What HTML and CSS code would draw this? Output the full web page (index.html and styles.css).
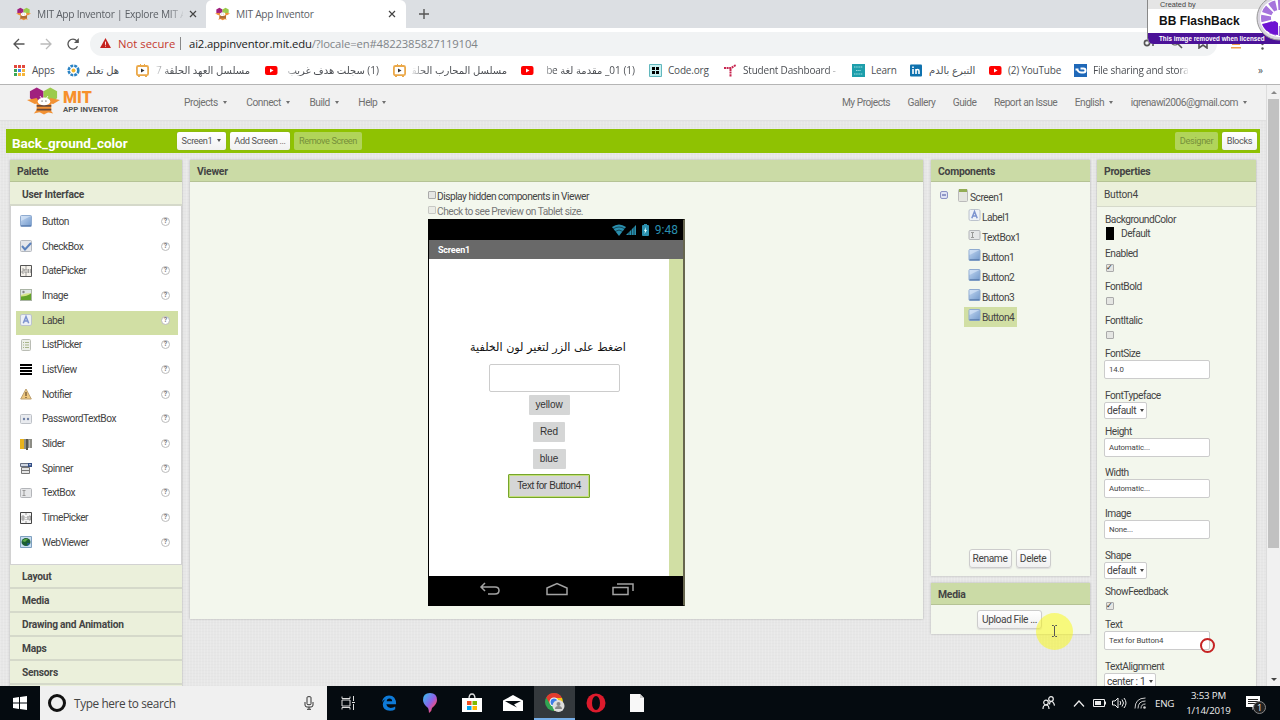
FILE: index.html
```html
<!DOCTYPE html>
<html lang="en">
  <head>
    <meta charset="utf-8">
    <title>MIT App Inventor</title>
    <link rel="stylesheet" href="styles.css">
  </head>

  <body>
    <!--Shared icons-->
    <svg class="defs">
      <linearGradient id="blue" x2="1" y2="1"><stop stop-color="#c5d9f2"/><stop offset="1" stop-color="#7198cb"/></linearGradient>
      <linearGradient id="balloon" x2="1" y2="1"><stop stop-color="#2fc6ee"/><stop offset=".5" stop-color="#8c62e8"/><stop offset=".75" stop-color="#ec4f83"/><stop offset="1" stop-color="#ffb52e"/></linearGradient>
      <symbol id="bee" viewBox="0 0 34 28">
        <path fill="#a0207e" d="M3 4l7-4 7 4v7l-6 4H7l-4-4z"/>
        <path fill="#9ccb4b" d="M17 4l7-4 7 4v7l-4 4h-4l-6-4z"/>
        <path fill="#f29133" d="M0 13l10-2 3 5-5 1zM34 13l-10-2-3 5 6 1zM7 27l4-5 4 3zM27 27l-4-5-4 3z"/>
        <path fill="#f29133" d="M10 16h15v8l-7.500 4-7.500-4z"/>
        <path fill="#6a4a3a" d="M10 18h15v1.800H10zM10 22h15v1.800H10z"/>
        <ellipse cx="17.500" cy="14.500" rx="6.500" ry="4" fill="#fff"/>
        <path stroke="#fff" fill="none" d="M13.500 9l2 3M21.500 9l-2 3"/>
        <circle cx="15.500" cy="14" r=".6"/><circle cx="19.500" cy="14" r=".6"/>
      </symbol>
      <symbol id="tv" viewBox="0 0 13 13"><rect x=".9" y="2" width="11.2" height="9.2" rx="1.5" fill="#fff" stroke="#eba94a" stroke-width="1.8"/><path stroke="#eba94a" d="M4 0l2 2M9 0L7 2M2 12.5h2M9 12.5h2"/><path fill="#333" d="M5 4.5l3.5 2L5 8.5z"/></symbol>
      <symbol id="yt" viewBox="0 0 13 13"><rect y="2" width="12.5" height="9" rx="2" fill="#f00"/><path fill="#fff" d="M5 4.5l3.5 2L5 8.5z"/></symbol>
      <symbol id="button" viewBox="0 0 12 12"><rect x=".5" y=".5" width="11" height="11" rx="1" fill="url(#blue)" stroke="#8fabd0"/><path fill="#dbe8f8" opacity=".6" d="M1 1h10L1 6z"/><path stroke="#5577a8" d="M1 10.8h10"/></symbol>
      <symbol id="label" viewBox="0 0 12 12"><rect x=".5" y=".5" width="11" height="11" rx="1.5" fill="#edf1f7" stroke="#bcc3cd"/><path fill="none" stroke="#7c93cf" stroke-width="1.5" d="M3.3 9.3L6 2.5l2.7 6.8M4.2 7h3.6"/></symbol>
      <symbol id="textbox" viewBox="0 0 12 12"><rect x=".5" y="1.5" width="11" height="9" rx="1" fill="#e5e6e8" stroke="#b3b5b9"/><path stroke="#999" fill="none" d="M2.5 3.5h3M4 3.5v5M2.5 8.5h3"/></symbol>
    </svg>

    <div class="tabs">
      <div class="tab">
        <svg class="bee-icon"><use href="#bee"/></svg>
        <span class="tab-title fade">MIT App Inventor | Explore MIT A</span>
        <svg class="close" viewBox="0 0 8 8"><path d="M1 1l6 6M7 1L1 7"/></svg>
      </div>
      <div class="tab active">
        <svg class="bee-icon"><use href="#bee"/></svg>
        <span class="tab-title">MIT App Inventor</span>
        <svg class="close" viewBox="0 0 8 8"><path d="M1 1l6 6M7 1L1 7"/></svg>
      </div>
      <svg class="plus" viewBox="0 0 10 10"><path d="M5 0v10M0 5h10"/></svg>
    </div>

    <div class="toolbar">
      <svg class="nav-icon" viewBox="0 0 12 12"><path d="M11.5 6H1.5M6 1L1 6l5 5"/></svg>
      <svg class="nav-icon light" viewBox="0 0 12 12"><path d="M.5 6h10M6 1l5 5-5 5"/></svg>
      <svg class="nav-icon" viewBox="0 0 12 12"><path d="M10.5 8.2A5 5 0 1 1 9.8 2.8L11 4.2"/><path fill="#555" stroke="none" d="M11.8 0v5H7z"/></svg>
      <div class="omnibox">
        <svg class="warn" viewBox="0 0 12 11"><path fill="#c5221f" d="M6 0l6 11H0z"/><path stroke="#fff" d="M6 4v3.5M6 8.5v1"/></svg>
        <span class="not-secure">Not secure</span>
        <span class="divider"></span>
        <span class="url">ai2.appinventor.mit.edu<span class="path">/?locale=en#4822385827119104</span></span>
        <svg class="omni-actions" viewBox="0 0 66 12"><g fill="none" stroke="#555" stroke-width="1.6"><circle cx="4" cy="6" r="2.6"/><path d="M6 6h6M10 6v3"/><circle cx="32" cy="4" r="4" stroke-width="1.2"/><path d="M35 7l4 4M56 1v10l4-3 4 3V1"/></g></svg>
      </div>
      <svg class="ext" viewBox="0 0 10 10"><path fill="#f0a04b" d="M1 1h8v5H1zM0 8h10v1.5H0z"/></svg>
      <svg class="dots" viewBox="0 0 3 12"><circle cx="1.500" cy="1.500" r="1.200"/><circle cx="1.500" cy="6" r="1.200"/><circle cx="1.500" cy="10.500" r="1.200"/></svg>
    </div>

    <div class="bookmarks">
      <div class="bm w54">
        <svg viewBox="0 0 13 13"><g fill="#e2483d"><path d="M1 1h3v3H1zM5 1h3v3H5zM9 1h3v3H9z"/></g><path fill="#3aa757" d="M1 5h3v3H1z"/><path fill="#4285f4" d="M5 5h3v3H5z"/><path fill="#f5b53c" d="M9 5h3v3H9zM5 9h3v3H5zM9 9h3v3H9z"/><path fill="#3aa757" d="M1 9h3v3H1z"/></svg>
        <span>Apps</span>
      </div>
      <div class="bm w69">
        <svg viewBox="0 0 13 13"><circle cx="6.5" cy="6.5" r="4.8" fill="none" stroke="#2b83c4" stroke-width="2.6" stroke-dasharray="2.8 1"/><circle cx="6.5" cy="6.5" r="2" fill="#f3b62f"/></svg>
        <span dir="rtl">هل تعلم</span>
      </div>
      <div class="bm w129"><svg><use href="#tv"/></svg><span class="clip fade-left" dir="rtl">مسلسل العهد الحلقة 7</span></div>
      <div class="bm w128"><svg><use href="#yt"/></svg><span class="clip fade-left" dir="rtl">(1) سجلت هدف غريب</span></div>
      <div class="bm w128"><svg><use href="#tv"/></svg><span class="clip fade-left" dir="rtl">مسلسل المحارب الحلقة</span></div>
      <div class="bm w128"><svg><use href="#yt"/></svg><span class="clip fade-left" dir="rtl">(1) 01_ مقدمة لغة be</span></div>
      <div class="bm w75">
        <svg viewBox="0 0 13 13"><path fill="#c9f1f1" stroke="#62b7bd" d="M.5.5h12v12H.5z"/><path d="M3 3h3v3H3zM7 3h3v3H7zM3 7h3v3H3zM7 7h3v3H7z"/></svg>
        <span>Code.org</span>
      </div>
      <div class="bm w128">
        <svg viewBox="0 0 13 13"><path fill="none" stroke="#c72650" stroke-width="2" stroke-dasharray="2 .6" d="M0 4h7l5-3M6.5 5v8"/></svg>
        <span class="clip fade">Student Dashboard -</span>
      </div>
      <div class="bm w58">
        <svg viewBox="0 0 13 13"><path fill="#1d9eab" d="M0 0h13v13H0z"/><path stroke="#9adde2" stroke-dasharray="1.5 .7" d="M2 3h9M4 6.5h5M2 10h9"/></svg>
        <span>Learn</span>
      </div>
      <div class="bm w79">
        <svg viewBox="0 0 13 13"><rect y=".5" width="12" height="12" rx="1" fill="#0f72ae"/><path stroke="#fff" stroke-width="1.6" fill="none" d="M3 5v5M3 2.6v1.5M6 5v5M6 7q0-1.5 1.5-1.5T9 7v3"/></svg>
        <span dir="rtl">التبرع بالدم</span>
      </div>
      <div class="bm w85"><svg><use href="#yt"/></svg><span>(2) YouTube</span></div>
      <div class="bm w128">
        <svg viewBox="0 0 13 13"><path fill="#1f68b8" d="M0 0h13v13H0z"/><path fill="none" stroke="#fff" stroke-width="2" d="M1.500 5.500h3M6.500 4.500h3a2 2 0 0 1 0 4h-2q-3 0-4-2.500"/></svg>
        <span class="clip fade">File sharing and stora</span>
      </div>
      <span class="more">»</span>
    </div>

    <div class="page">
      <div class="content">
        <div class="header">
          <svg class="logo-bee"><use href="#bee"/></svg>
          <div class="logo"><div class="mit">MIT</div><div class="ai">APP INVENTOR</div></div>
          <div class="menu">
            <span>Projects<i></i></span><span>Connect<i></i></span><span>Build<i></i></span><span>Help<i></i></span>
          </div>
          <div class="menu right">
            <span>My Projects</span><span>Gallery</span><span>Guide</span><span>Report an Issue</span><span>English<i></i></span><span>iqrenawi2006@gmail.com<i></i></span>
          </div>
        </div>

        <div class="project-bar">
          <div class="project-name">Back_ground_color</div>
          <div class="bar-button screen">Screen1<i></i></div>
          <div class="bar-button add">Add Screen ...</div>
          <div class="bar-button remove disabled">Remove Screen</div>
          <div class="bar-button designer disabled">Designer</div>
          <div class="bar-button blocks">Blocks</div>
        </div>

        <div class="columns">
          <div class="panel palette">
            <div class="panel-head">Palette</div>
            <div class="category first">User Interface</div>
            <div class="items">
              <div class="item"><svg><use href="#button"/></svg><span>Button</span><b>?</b></div>
              <div class="item"><svg viewBox="0 0 12 12"><rect x=".5" y=".5" width="11" height="11" rx="1" fill="#e4e6ea" stroke="#b4b8be"/><path fill="none" stroke="#5b82bd" stroke-width="2" d="M2 6l3 3.5L11 3"/></svg><span>CheckBox</span><b>?</b></div>
              <div class="item"><svg viewBox="0 0 12 12"><path fill="#f5f2ec" stroke="#555" d="M.5.5h11v11H.5z"/><path stroke="#888" stroke-width=".8" fill="none" d="M2 4h2v2H2v2h2M5 4h2v4H5zM8.500 4v4M10.300 4v4M6 1v2M6 9v2"/></svg><span>DatePicker</span><b>?</b></div>
              <div class="item"><svg viewBox="0 0 12 12"><rect x=".5" y=".5" width="11" height="11" fill="#dfe5e6" stroke="#aab4a5"/><path fill="#d6e48a" d="M1 6q5-2 10-2v7H1z"/><path fill="#63a32a" d="M1 7.500q6 0 10-3V11H1z"/><circle cx="3.500" cy="3" r="1.200" fill="#888"/></svg><span>Image</span><b>?</b></div>
              <div class="item selected"><svg><use href="#label"/></svg><span>Label</span><b>?</b></div>
              <div class="item"><svg viewBox="0 0 12 12"><rect x="1.500" y=".5" width="9" height="11" rx="1" fill="#eceee8" stroke="#babdb5"/><path stroke="#a9b58b" d="M3 3.500h1M5 3.500h4M3 6h1M5 6h4M3 8.500h1M5 8.500h4"/></svg><span>ListPicker</span><b>?</b></div>
              <div class="item"><svg viewBox="0 0 12 12"><path d="M0 1h12v2H0zM0 4h12v2H0zM0 7h12v2H0zM0 10h12v2H0z"/></svg><span>ListView</span><b>?</b></div>
              <div class="item"><svg viewBox="0 0 12 12"><path fill="#edc77e" stroke="#bda071" d="M6 1l5.300 10H.7z"/><path stroke="#705331" stroke-width="1.300" d="M6 4v4M6 9v1"/></svg><span>Notifier</span><b>?</b></div>
              <div class="item"><svg viewBox="0 0 12 12"><rect x=".5" y="1.500" width="11" height="9" rx="1" fill="#e9ebef" stroke="#bdc1c7"/><circle cx="4" cy="6" r="1.200" fill="#6e7fa5"/><circle cx="8" cy="6" r="1.200" fill="#6e7fa5"/></svg><span>PasswordTextBox</span><b>?</b></div>
              <div class="item"><svg viewBox="0 0 12 12"><path fill="#e8b31e" d="M0 1h4v10H0z"/><path fill="#8d8d85" d="M4 1h2v10H4zM8 1h4v9H8z"/><path fill="#55554f" d="M6 1h2v11H6z"/><path fill="#bbb" d="M9 2h1v8H9z"/></svg><span>Slider</span><b>?</b></div>
              <div class="item"><svg viewBox="0 0 12 12"><path fill="#ced6e2" stroke="#666f80" d="M.5 1.500h11v3H.5z"/><path fill="#324e86" d="M8 1h4v4H8z"/><path fill="#fff" d="M9 2.300h2l-1 1.500z"/><path fill="#e5e5e5" stroke="#777" d="M1.500 5.500h8v6h-8zM2 8.500h7"/></svg><span>Spinner</span><b>?</b></div>
              <div class="item"><svg><use href="#textbox"/></svg><span>TextBox</span><b>?</b></div>
              <div class="item"><svg viewBox="0 0 12 12"><path fill="#f4f4f4" stroke="#444" d="M.5.500h11v11H.5z"/><path stroke="#888" stroke-width=".8" fill="none" d="M2 4h2v4H2zM2 6h2M6 5v1M6 7v1M7.800 4v4M9 4h1.500v4H9zM6 1v2M6 9v2"/></svg><span>TimePicker</span><b>?</b></div>
              <div class="item"><svg viewBox="0 0 12 12"><path fill="#c7dcf0" stroke="#7fa0bf" d="M.5.500h11v11H.5z"/><ellipse cx="6" cy="6" rx="4.500" ry="4" fill="#1c5f35"/><path fill="#5ca848" d="M2 5q3-3 6-2L5 6z"/><path fill="#215a8b" d="M7 7h3.500l-3 3z"/></svg><span>WebViewer</span><b>?</b></div>
            </div>
            <div class="category">Layout</div>
            <div class="category">Media</div>
            <div class="category">Drawing and Animation</div>
            <div class="category">Maps</div>
            <div class="category">Sensors</div>
            <div class="category"></div>
          </div>

          <div class="panel viewer">
            <div class="panel-head">Viewer</div>
            <div class="viewer-body">
              <div class="option"><span class="check"></span>Display hidden components in Viewer</div>
              <div class="option dim"><span class="check"></span>Check to see Preview on Tablet size.</div>
              <div class="phone">
                <div class="status">
                  <svg viewBox="0 0 40 12"><g fill="#2a8fae"><path d="M0 3q7-5 14 0l-7 9z"/><path d="M14 11l10-10v10z"/><rect x="30" y="1" width="7" height="11" rx="1"/><path d="M32 0h3v2h-3z"/></g><path fill="none" stroke="#000" stroke-width=".5" d="M1 5q6-4 12 0M3 7.500q4-3 8 0M17 5v6M19.500 3v8M22 1v10"/><path fill="#dff" d="M34 3l-2 4h1l-.5 3 2.500-4h-1.300z"/></svg>
                  <span>9:48</span>
                </div>
                <div class="screen-title">Screen1</div>
                <div class="screen-body">
                  <div class="canvas">
                    <div class="arabic" dir="rtl">اضغط على الزر لتغير لون الخلفية</div>
                    <div class="phone-input"></div>
                    <div class="pbtn yellow">yellow</div>
                    <div class="pbtn red">Red</div>
                    <div class="pbtn blue">blue</div>
                    <div class="pbtn four">Text for Button4</div>
                  </div>
                </div>
                <div class="phone-nav">
                  <svg viewBox="0 0 22 14"><path d="M6 1L2 5l4 4M2 5h14q4 0 4 3.500T16 12H9"/></svg>
                  <svg viewBox="0 0 22 14"><path d="M1 6l10-4.500L21 6v6.500H1z"/></svg>
                  <svg viewBox="0 0 22 14"><path d="M1 5.500h15v7H1zM5 2h16v7"/></svg>
                </div>
              </div>
            </div>
          </div>

          <div class="middle">
            <div class="panel components">
              <div class="panel-head">Components</div>
              <div class="tree">
                <div class="root">
                  <svg class="minus" viewBox="0 0 8 8"><rect x=".5" y=".5" width="7" height="7" rx="1.500" fill="#dfe2f3" stroke="#8d93c4"/><path stroke="#43509c" d="M2 4h4"/></svg>
                  <svg class="screen-icon" viewBox="0 0 10 13"><rect x=".5" y=".5" width="9" height="12" rx="1" fill="#e5e6e1" stroke="#bbb"/><path fill="#93ad55" d="M1 0h8v3H1z"/></svg>
                  <span>Screen1</span>
                </div>
                <div class="node"><svg><use href="#label"/></svg><span>Label1</span></div>
                <div class="node"><svg><use href="#textbox"/></svg><span>TextBox1</span></div>
                <div class="node"><svg><use href="#button"/></svg><span>Button1</span></div>
                <div class="node"><svg><use href="#button"/></svg><span>Button2</span></div>
                <div class="node"><svg><use href="#button"/></svg><span>Button3</span></div>
                <div class="node selected"><svg><use href="#button"/></svg><span>Button4</span></div>
              </div>
              <div class="actions"><div class="btn rename">Rename</div><div class="btn delete">Delete</div></div>
            </div>
            <div class="panel media">
              <div class="panel-head">Media</div>
              <div class="btn upload">Upload File ...</div>
            </div>
          </div>

          <div class="panel properties">
            <div class="panel-head">Properties</div>
            <div class="prop-name">Button4</div>
            <div class="props">
              <div class="prop h34"><label>BackgroundColor</label><div class="color"><span class="swatch"></span>Default</div></div>
              <div class="prop"><label>Enabled</label><span class="check on"></span></div>
              <div class="prop"><label>FontBold</label><span class="check"></span></div>
              <div class="prop"><label>FontItalic</label><span class="check"></span></div>
              <div class="prop tall"><label>FontSize</label><div class="field">14.0</div></div>
              <div class="prop mid"><label>FontTypeface</label><div class="select">default<i></i></div></div>
              <div class="prop tall"><label>Height</label><div class="field">Automatic...</div></div>
              <div class="prop tall"><label>Width</label><div class="field">Automatic...</div></div>
              <div class="prop tall"><label>Image</label><div class="field">None...</div></div>
              <div class="prop mid"><label>Shape</label><div class="select">default<i></i></div></div>
              <div class="prop"><label>ShowFeedback</label><span class="check on"></span></div>
              <div class="prop tall"><label>Text</label><div class="field">Text for Button4</div></div>
              <div class="prop mid"><label>TextAlignment</label><div class="select wide">center : 1<i></i></div></div>
            </div>
          </div>
        </div>
      </div>
      <div class="scrollbar"><span class="up"></span><div class="thumb"></div><span class="down"></span></div>
    </div>

    <div class="taskbar">
      <div class="start"><svg viewBox="0 0 14 14"><path fill="#fff" d="M0 2l6-1v5.500H0zM7 .9L14 0v6.500H7zM0 7.500h6V13l-6-1zM7 7.500h7V14l-7-1z"/></svg></div>
      <div class="search">
        <span class="cortana"></span><span class="search-text">Type here to search</span>
        <svg class="mic" viewBox="0 0 10 14"><rect x="3" y=".7" width="4" height="8" rx="1" fill="none" stroke="#333"/><path fill="none" stroke="#333" d="M1 6v3q0 2 2 2h4q2 0 2-2V6M5 11v2M3 13.300h4"/></svg>
      </div>
      <div class="task"><svg viewBox="0 0 16 16"><path fill="none" stroke="#ddd" d="M2 5h8v6H2zM2 1.500v2h8v-2M2 14.500v-2h8v2M13.500 1v5M13.500 9v6M12 7.500h3"/></svg></div>
      <div class="task"><svg viewBox="0 0 18 18"><path fill="#0e7ad7" d="M1 8Q2 1 9 .5q8 0 8 10H6q1 4 5 4 3 0 5-1.500V16q-2 1.700-6 1.700-8-.5-8-7Q2.500 6 6 4.500 3 5 1 8zm5.500-1h6Q12.500 4 9.500 4T6.500 7z"/></svg></div>
      <div class="task"><svg class="big" viewBox="0 0 18 20"><path fill="url(#balloon)" d="M9 0q7 0 7 7 0 4-5 8 0 3-3 5 0-3-1-5-5-4-5-8 0-7 7-7z"/></svg></div>
      <div class="task"><svg class="big" viewBox="0 0 20 20"><path fill="none" stroke="#ddd" stroke-width="1.400" d="M7 6Q7 1 10 1t3 5"/><path fill="#fff" d="M0 5h20v14H0z"/><path fill="#f25022" d="M5 8h4.500v4H5z"/><path fill="#7fba00" d="M10.500 8H15v4h-4.500z"/><path fill="#00a4ef" d="M5 13h4.500v4H5z"/><path fill="#ffb900" d="M10.500 13H15v4h-4.500z"/></svg></div>
      <div class="task"><svg class="big" viewBox="0 0 20 20"><path fill="#fff" d="M0 7.500L10 2l10 5.500V18H0z"/><path fill="#050b10" d="M2 8h16l-7 3.500 3 3L8 11.500z"/></svg></div>
      <div class="task current"><svg class="big" viewBox="0 0 20 20"><circle cx="9" cy="10" r="9" fill="#31a452"/><path fill="#e33b2e" d="M1.200 5.500A9 9 0 0 1 17 6H9l-4 6z"/><path fill="#fbc116" d="M10 10l-1 9q9-1 9-9l-1-4H9z"/><circle cx="9" cy="10" r="4.500" fill="#fff"/><circle cx="9" cy="10" r="3.500" fill="#3c7de6"/><circle cx="13.500" cy="14" r="6" fill="#dedede"/><circle cx="13.500" cy="12" r="2" fill="#888"/><path fill="#888" d="M10 17q0-3 3.500-3t3.500 3z"/></svg></div>
      <div class="task"><svg class="big" viewBox="0 0 20 20"><ellipse cx="10" cy="10" rx="9.500" ry="9.500" fill="#dc1b2c"/><ellipse cx="10" cy="10" rx="4" ry="7" fill="#050b10"/></svg></div>
      <div class="task"><svg class="big" viewBox="0 0 20 20"><path fill="#f8f8f8" d="M3 1h10l4 4v14H3z"/><path fill="#ccc" d="M13 1v4h4z"/></svg></div>
      <div class="tray">
        <svg class="people" viewBox="0 0 13 14"><g fill="none" stroke="#eee" stroke-width="1.200"><circle cx="9" cy="3" r="2.300"/><circle cx="4" cy="6.500" r="2.300"/><path d="M1 13q0-4 3-4t3 4M7.500 8.500Q7.500 5.500 9.500 5.500t3 4"/></g></svg>
        <svg class="chevron" viewBox="0 0 12 7"><path fill="none" stroke="#eee" stroke-width="1.200" d="M1 6.500L6 1l5 5.500"/></svg>
        <svg class="battery" viewBox="0 0 13 8"><path fill="none" stroke="#eee" d="M.5.500h11v7H.5z"/><path fill="#eee" d="M2 2h6v4H2zM12 2.500h1v3h-1z"/></svg>
        <svg class="volume" viewBox="0 0 15 12"><path fill="none" stroke="#eee" d="M.5 4v4H3l3 3V1L3 4zM8 4q1.500 2 0 4M10 2.500q3 3.500 0 7M12 1q4 5 0 10"/></svg>
        <svg class="wifi" viewBox="0 0 12 12"><path fill="none" stroke="#ccc" d="M1 11.500Q1 1 11.500 1M4 11.500Q4 4 11.500 4M7 11.500Q7 7 11.500 7"/><circle cx="10.500" cy="10.500" r="1.300" fill="#ccc"/></svg>
        <span class="lang">ENG</span>
        <div class="clock"><div>3:53 PM</div><div>1/14/2019</div></div>
        <div class="notes"><svg viewBox="0 0 14 14"><path fill="#fff" d="M0 0h14v11H9l-2.500 3v-3H0z"/><path stroke="#222" d="M2 3.500h10M2 5.500h10M2 7.500h8"/></svg><span class="badge">1</span></div>
      </div>
    </div>

    <!--Recorder overlays-->
    <div class="watermark">
      <div class="created">Created by</div>
      <div class="brand">BB FlashBack</div>
      <div class="licensed">This image removed when licensed</div>
      <svg class="reel" viewBox="0 0 24 42"><circle cx="23" cy="18" r="22" fill="#d9d5df" stroke="#999"/><circle cx="23" cy="18" r="19" fill="#fff"/><circle cx="23" cy="18" r="13" fill="none" stroke="#a674dc" stroke-width="10" stroke-dasharray="5.500 2"/><path fill="#6d13d2" d="M6 24l13-3 3 2v12Q10 34 6 24z"/></svg>
    </div>
    <div class="highlight"><svg viewBox="0 0 7 12"><path fill="none" stroke="#555" d="M1 .5h1.500l1 1 1-1H6M3.500 1v10M1 11.500h1.500l1-1 1 1H6"/></svg></div>
    <div class="ring"></div>
  </body>
</html>
```

FILE: styles.css
```css
* {
  box-sizing: border-box;
}

body {
  margin: 0;
  width: 1280px;
  height: 720px;
  overflow: hidden;
  position: relative;
  display: flex;
  flex-direction: column;
  font-family: Roboto, "Noto Sans", sans-serif;
  font-size: 10.2px;
  color: #444;
  white-space: nowrap;
}

svg {
  display: block;
  flex-shrink: 0;
}

.defs {
  position: absolute;
  width: 0;
  height: 0;
}

/* browser */
.tabs,
.toolbar,
.bookmarks,
.taskbar {
  font-family: "Open Sans", "DejaVu Sans", sans-serif;
}

.tabs {
  height: 28px;
  flex-shrink: 0;
  background: #dcdfe3;
  display: flex;
  align-items: center;
}

.tab {
  width: 206px;
  height: 28px;
  padding-left: 16px;
  display: flex;
  align-items: center;
  font-size: 10.2px;
  letter-spacing: -.27px;
  color: #5c6066;
}

.tab.active {
  width: 200px;
  padding-left: 9px;
  background: #fff;
  border-radius: 6px 6px 0 0;
}

.bee-icon {
  width: 15px;
  height: 14px;
  margin-right: 6px;
}

.tab-title {
  width: 146px;
}

.close {
  width: 8px;
  height: 8px;
  margin-left: 6px;
  fill: none;
  stroke: #444;
  stroke-width: 1.2;
}

.plus {
  width: 10px;
  height: 10px;
  margin-left: 13px;
  fill: none;
  stroke: #555;
  stroke-width: 1.4;
}

.fade {
  -webkit-mask-image: linear-gradient(90deg, #000 90%, rgba(0, 0, 0, .1));
}

.fade-left {
  -webkit-mask-image: linear-gradient(270deg, #000 85%, rgba(0, 0, 0, .1));
}

.toolbar {
  height: 28px;
  flex-shrink: 0;
  background: #fff;
  display: flex;
  align-items: center;
  padding: 3px 0 0 13px;
}

.nav-icon {
  width: 12px;
  height: 12px;
  margin-right: 15px;
  fill: none;
  stroke: #555;
  stroke-width: 1.3;
}

.nav-icon.light {
  stroke: #bbb;
}

.nav-icon:nth-child(3) {
  margin-right: 11px;
}

.omnibox {
  width: 1127px;
  height: 24px;
  border-radius: 12px;
  background: #f1f3f4;
  display: flex;
  align-items: center;
  padding-left: 10px;
  padding-bottom: 1px;
  font-size: 11.3px;
}

.warn {
  width: 11px;
  height: 10px;
  margin-right: 7px;
}

.not-secure {
  color: #c5392f;
  width: 56px;
}

.divider {
  width: 1px;
  height: 13px;
  background: #888;
  margin: 0 8px 0 6px;
}

.url {
  color: #222;
  letter-spacing: -.15px;
}

.path {
  color: #808488;
}

.omni-actions {
  width: 66px;
  height: 12px;
  margin-left: auto;
  margin-right: 8px;
}

.ext {
  width: 10px;
  height: 10px;
  margin-left: 14px;
}

.dots {
  width: 3px;
  height: 12px;
  margin-left: 20px;
  fill: #555;
}

.bookmarks {
  height: 29px;
  flex-shrink: 0;
  background: #fff;
  border-bottom: 1px solid #b5b5b5;
  display: flex;
  align-items: center;
  padding-left: 13px;
  font-size: 10px;
  letter-spacing: -.2px;
  color: #4c4f54;
}

.bm {
  display: flex;
  align-items: center;
  gap: 6px;
  flex-shrink: 0;
}

.bm svg {
  width: 13px;
  height: 13px;
}

.clip {
  width: 95px;
}

.w54 { width: 54px; }
.w58 { width: 58px; }
.w69 { width: 69px; }
.w75 { width: 75px; }
.w79 { width: 79px; }
.w85 { width: 85px; }
.w128 { width: 128px; }
.w129 { width: 129px; }

.more {
  margin-left: 56px;
}

/* app inventor page */
.page {
  height: 601px;
  flex-shrink: 0;
  display: flex;
  letter-spacing: -.5px;
}

.content {
  width: 1266px;
  overflow: hidden;
  background: repeating-linear-gradient(90deg, rgba(255, 255, 255, .15) 0 1px, transparent 1px 3px), repeating-linear-gradient(#e4e4e4 0 1px, #e7e7e7 1px 3px);
}

.header {
  height: 36px;
  background: #f1f1f1;
  border-bottom: 1px solid #e0e0e0;
  display: flex;
  align-items: center;
  padding: 0 19px 0 27px;
  color: #707070;
}

.logo-bee {
  width: 33px;
  height: 28px;
  margin-top: -4px;
}

.logo {
  width: 124px;
  padding-left: 3px;
  letter-spacing: 0;
}

.mit {
  color: #f7902b;
  font-size: 16px;
  line-height: 15px;
  font-weight: 900;
}

.ai {
  color: #555;
  font-size: 7.8px;
  line-height: 10px;
  font-weight: 700;
}

.menu {
  display: flex;
  gap: 19.5px;
  letter-spacing: -.45px;
}

.menu.right {
  margin-left: auto;
  gap: 17.5px;
  letter-spacing: -.5px;
}

.menu i,
.bar-button i,
.select i {
  display: inline-block;
  border: 2px solid transparent;
  border-top: 3px solid currentColor;
  border-bottom: 0;
  margin-left: 5px;
  vertical-align: 2px;
}

.project-bar {
  margin: 8px 6px 7px;
  height: 24px;
  background: #8fc202;
  display: flex;
  align-items: center;
  padding-left: 6px;
}

.project-name {
  width: 165px;
  color: #fff;
  font-size: 13.5px;
  font-weight: 700;
  letter-spacing: 0;
  padding-top: 3px;
}

.bar-button {
  height: 18px;
  margin-right: 4px;
  margin-top: -1px;
  background: linear-gradient(#fff, #f1f1f1);
  border-radius: 2px;
  box-shadow: 0 0 1px #777;
  font-size: 9.2px;
  letter-spacing: -.35px;
  color: #555;
  display: flex;
  align-items: center;
  justify-content: center;
}

.bar-button.disabled {
  background: #b1d45a;
  color: #76903a;
  box-shadow: none;
}

.remove.disabled {
  letter-spacing: -.42px;
}

.screen { width: 49px; }
.add { width: 60px; }
.remove { width: 68px; }
.designer { width: 43px; margin-left: auto; }
.blocks { width: 35px; margin-right: 3px; }

.columns {
  display: flex;
  align-items: flex-start;
  padding-left: 10px;
}

.panel {
  background: #f3f7ed;
  box-shadow: 0 0 2px #aaa;
}

.panel-head {
  height: 22px;
  line-height: 23px;
  padding-left: 7px;
  background: #cbdba6;
  border-bottom: 1px solid #b5c395;
  font-size: 10.4px;
  font-weight: 700;
  letter-spacing: -.25px;
}

.palette {
  width: 172px;
  margin-right: 8px;
}

.category {
  height: 24px;
  line-height: 24px;
  padding-left: 12px;
  background: #ebf0db;
  border-bottom: 2px solid #d5d9ca;
  font-weight: 700;
  letter-spacing: -.22px;
}

.first {
  line-height: 26px;
}

.items {
  height: 359px;
  padding-top: 6px;
  background: #fff;
  border: 1px solid #d2d2d2;
  border-top: 0;
}

.item {
  height: 24.7px;
  margin: 0 3px 0 5px;
  padding: 0 0 6px 4px;
  display: flex;
  align-items: center;
}

.item svg {
  width: 12px;
  height: 12px;
}

.item span {
  padding-left: 10px;
  width: 129px;
}

.item b {
  width: 9px;
  height: 9px;
  line-height: 7px;
  border: 1px solid #bbb;
  border-radius: 50%;
  font-size: 7px;
  letter-spacing: 0;
  text-align: center;
  color: #777;
  background: #fff;
}

.selected {
  background: #d1dfa4;
}

.viewer {
  width: 733px;
  height: 459px;
  margin-right: 8px;
}

.viewer-body {
  padding: 7px 0 0 238px;
}

.option {
  height: 15px;
  display: flex;
  align-items: center;
  gap: 1px;
}

.dim {
  color: #777;
}

.check {
  display: block;
  width: 8px;
  height: 8px;
  border: 1px solid #aaa;
  border-radius: 1px;
  background: #e5e6e3;
}

.option .check {
  margin-top: -3px;
}

.dim .check {
  opacity: .6;
}

.phone {
  width: 257px;
  height: 387px;
  border: 1px solid #000;
  border-right: 2px solid #66664e;
  background: #000;
}

.status {
  height: 20px;
  display: flex;
  align-items: center;
  justify-content: flex-end;
  gap: 3px;
  padding-right: 5px;
  color: #2a8fae;
  font-size: 12px;
  letter-spacing: 0;
}

.status svg {
  width: 40px;
  height: 12px;
}

.screen-title {
  height: 19px;
  line-height: 20px;
  padding-left: 9px;
  background: #696969;
  color: #fff;
  font-size: 9px;
  font-weight: 700;
  letter-spacing: -.2px;
}

.screen-body {
  height: 317px;
  background: #d1dfa4;
}

.canvas {
  width: 240px;
  height: 317px;
  background: #fff;
  padding-top: 82px;
  display: flex;
  flex-direction: column;
  align-items: center;
  font-family: "Liberation Sans", Arial, sans-serif;
  font-size: 10px;
  letter-spacing: -.35px;
  color: #333;
}

.arabic {
  height: 23px;
  padding-right: 2px;
  font-family: "DejaVu Sans", sans-serif;
  font-size: 11.2px;
  letter-spacing: 0;
  color: #111;
}

.phone-input {
  width: 131px;
  height: 28px;
  margin-left: 11px;
  margin-bottom: 3px;
  border: 1px solid #ccc;
  border-radius: 2px;
  flex-shrink: 0;
}

.pbtn {
  height: 20px;
  line-height: 19px;
  margin-bottom: 7px;
  flex-shrink: 0;
  background: #d5d6d6;
  border-radius: 1px;
  text-align: center;
}

.yellow { width: 41px; letter-spacing: -.1px; }
.red { width: 32px; letter-spacing: -.1px; }
.blue { width: 33px; margin-bottom: 5px; letter-spacing: -.1px; }

.pbtn.four {
  width: 82px;
  height: 24px;
  line-height: 22px;
  letter-spacing: -.4px;
  border: 1px solid #76a52c;
  box-shadow: inset 0 0 0 1px #c3e079;
}

.phone-nav {
  height: 28px;
  display: flex;
  justify-content: space-between;
  padding: 6px 49px 0 50px;
}

.phone-nav svg {
  width: 22px;
  height: 14px;
  fill: none;
  stroke: #a3a3a3;
  stroke-width: 1.5;
}

.middle {
  width: 159px;
  margin-right: 7px;
}

.components {
  height: 416px;
  margin-bottom: 7px;
  display: flex;
  flex-direction: column;
}

.tree {
  padding-top: 5px;
  letter-spacing: -.48px;
}

.root {
  display: flex;
  height: 20px;
  padding-left: 9px;
}

.minus {
  width: 8px;
  height: 8px;
  margin: 4px 10px 0 0;
}

.screen-icon {
  width: 10px;
  height: 13px;
  margin: 2px 2px 0 0;
}

.root span {
  padding-top: 5px;
}

.node {
  width: 53px;
  height: 20px;
  margin-left: 33px;
  padding: 2px 0 0 4px;
  display: flex;
}

.node svg {
  width: 13px;
  height: 12px;
}

.node span {
  padding: 3px 0 0 1px;
}

.actions {
  margin-top: auto;
  margin-bottom: 8px;
  padding-right: 2px;
  display: flex;
  justify-content: center;
  gap: 4px;
}

.btn {
  height: 19px;
  line-height: 17px;
  text-align: center;
  letter-spacing: -.4px;
  border: 1px solid #ccc;
  border-radius: 3px;
  background: linear-gradient(#fff, #f0f0f0);
  box-shadow: 0 1px 1px #ddd;
}

.rename { width: 43px; }
.delete { width: 35px; }
.upload { width: 65px; margin: 5px 0 0 46px; }

.media {
  height: 51px;
}

.properties {
  width: 159px;
  height: 540px;
}

.prop-name {
  height: 25px;
  line-height: 26px;
  padding-left: 7px;
  background: #ebf0db;
  border-bottom: 1px solid #d5d9ca;
  letter-spacing: -.25px;
}

.props {
  padding: 6px 0 0 7px;
}

.prop {
  height: 33.4px;
  padding-left: 1px;
}

.h34 { height: 34px; }
.mid { height: 36px; }
.tall { height: 41.4px; }

.prop label {
  display: block;
  height: 13px;
  line-height: 14px;
  letter-spacing: -.5px;
}

.mid label {
  line-height: 13px;
}

.prop .check {
  width: 8px;
  height: 8px;
  margin: 4px 0 0 1px;
}

.check.on::after {
  content: "✓";
  display: block;
  margin: -3px 0 0 -1px;
  font: bold 8px/11px "DejaVu Sans", sans-serif;
  color: #222;
}

.color {
  display: flex;
  align-items: center;
  gap: 7px;
  padding: 1px 0 0 1px;
}

.swatch {
  width: 8px;
  height: 13px;
  background: #000;
}

.field,
.select {
  margin-left: -1px;
  background: #fff;
  border: 1px solid #ccc;
  border-radius: 2px;
}

.field {
  width: 106px;
  height: 19px;
  line-height: 18px;
  padding-left: 4px;
  font-size: 7.8px;
  letter-spacing: -.1px;
}

.select {
  width: 43px;
  height: 17px;
  line-height: 15px;
  padding-left: 2px;
  letter-spacing: -.35px;
}

.select i {
  margin-left: 4px;
}

.select.wide {
  width: 52px;
}

.scrollbar {
  width: 14px;
  background: #f1f1f1;
  border-left: 1px solid #ddd;
  display: flex;
  flex-direction: column;
  align-items: center;
}

.up,
.down {
  border: 3px solid transparent;
}

.up {
  margin: 3px 0 5px;
  border-bottom-color: #888;
}

.down {
  margin: auto 0 2px;
  border-top-color: #444;
}

.thumb {
  width: 11px;
  height: 449px;
  background: #c1c1c1;
}

/* taskbar */
.taskbar {
  height: 34px;
  flex-shrink: 0;
  background: #050b10;
  display: flex;
}

.start {
  width: 40px;
  padding: 10px 0 0 13px;
}

.start svg {
  width: 14px;
  height: 14px;
}

.search {
  width: 287px;
  background: #f0f0f0;
  display: flex;
  align-items: center;
  padding-left: 8px;
}

.cortana {
  width: 18px;
  height: 18px;
  border: 3px solid #111;
  border-radius: 50%;
}

.search-text {
  width: 238px;
  padding-left: 8px;
  font-size: 11.8px;
  letter-spacing: -.37px;
}

.mic {
  width: 10px;
  height: 14px;
}

.task {
  width: 41.4px;
  display: flex;
  align-items: center;
  justify-content: center;
}

.task svg {
  width: 16px;
  height: 16px;
}

.task svg.big {
  width: 20px;
  height: 20px;
}

.task.current {
  background: #34393d;
  border-bottom: 2px solid #76aee8;
}

.tray {
  margin-left: auto;
  display: flex;
  align-items: center;
  color: #eee;
}

.people { width: 13px; height: 14px; margin-right: 18px; }
.chevron { width: 12px; height: 7px; margin-right: 8px; }
.battery { width: 13px; height: 8px; margin-right: 6px; }
.volume { width: 15px; height: 12px; margin-right: 7px; }
.wifi { width: 12px; height: 12px; margin-right: 9px; }

.lang {
  width: 30px;
  font-size: 9.8px;
  letter-spacing: -.3px;
}

.clock {
  width: 47px;
  text-align: center;
  font-size: 9.7px;
  letter-spacing: -.15px;
  line-height: 15px;
}

.notes {
  position: relative;
  margin: 0 20px 0 14px;
}

.notes svg {
  width: 14px;
  height: 14px;
}

.badge {
  position: absolute;
  left: 7px;
  top: 5px;
  width: 13px;
  height: 13px;
  border: 1px solid #888;
  border-radius: 50%;
  background: #222;
  text-align: center;
  font-size: 9px;
  line-height: 11px;
}

/* overlays */
.watermark {
  position: absolute;
  right: 0;
  top: 0;
  width: 133px;
  height: 44px;
  overflow: hidden;
  background: #fff;
  border-left: 1px solid #888;
  border-bottom-left-radius: 6px;
  font-family: "Liberation Sans", Arial, sans-serif;
}

.created {
  height: 9px;
  line-height: 10px;
  padding-left: 12px;
  background: #e5e5e5;
  font-size: 7.3px;
}

.brand {
  height: 24px;
  line-height: 25px;
  padding-left: 11px;
  color: #111;
  font-size: 12px;
  font-weight: 700;
}

.licensed {
  height: 11px;
  line-height: 11px;
  padding-left: 11px;
  background: #4b1298;
  color: #fff;
  font-size: 6.3px;
  font-weight: 700;
}

.reel {
  position: absolute;
  right: 0;
  top: 0;
  width: 24px;
  height: 42px;
}

.highlight {
  position: absolute;
  left: 1036px;
  top: 613px;
  width: 37px;
  height: 37px;
  border-radius: 50%;
  background: rgba(250, 250, 0, .48);
}

.highlight svg {
  width: 7px;
  height: 12px;
  margin: 12px 0 0 15px;
}

.ring {
  position: absolute;
  left: 1200px;
  top: 638px;
  width: 15px;
  height: 15px;
  border: 2px solid #c52323;
  border-radius: 50%;
}
```
